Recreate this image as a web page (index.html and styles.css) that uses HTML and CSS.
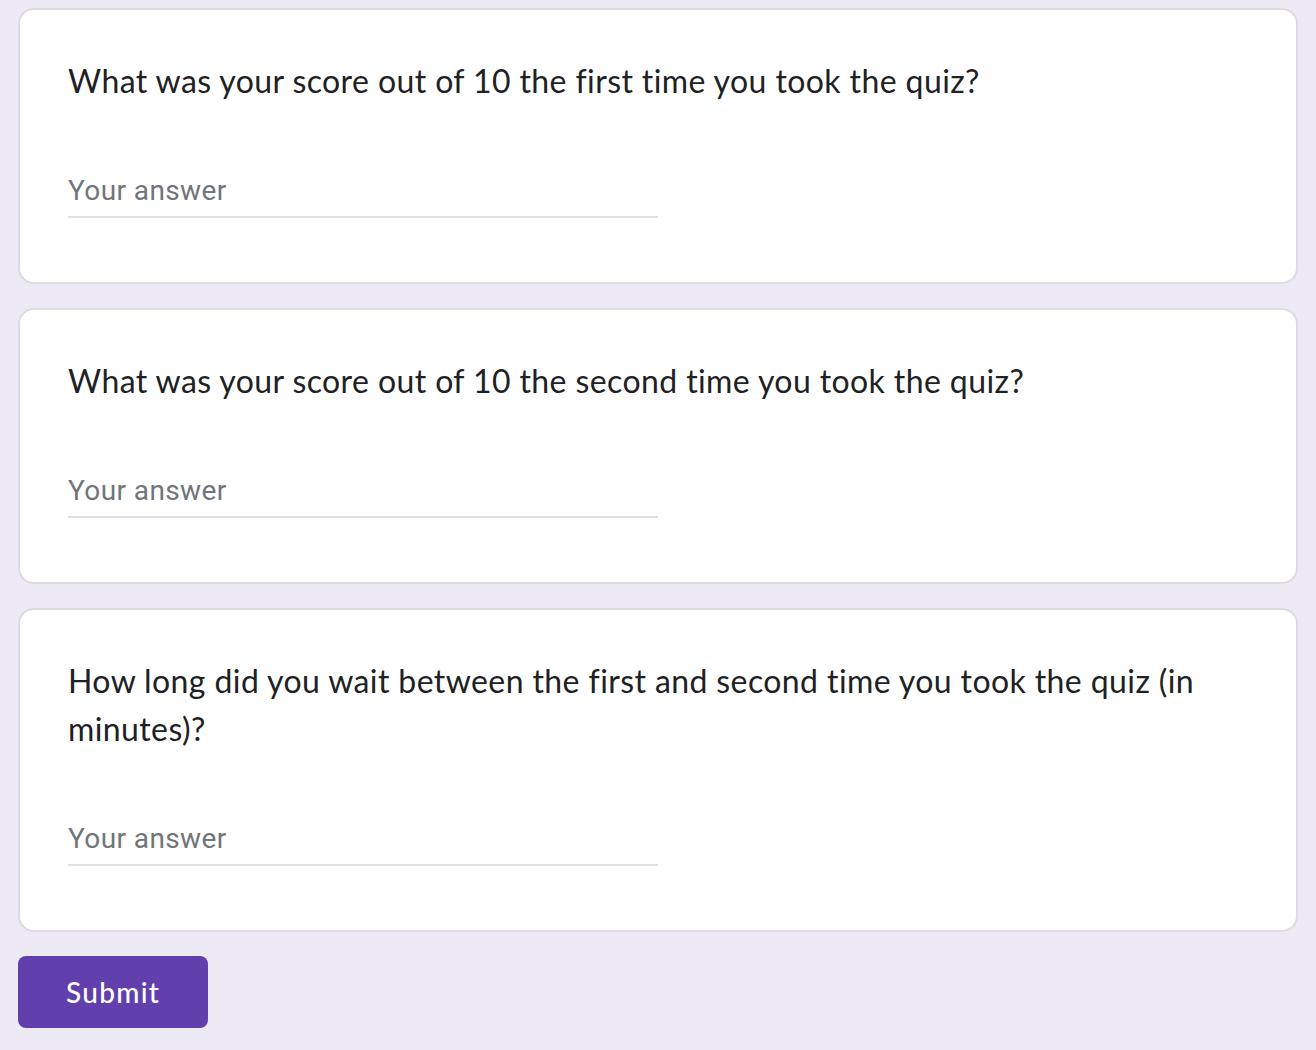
FILE: index.html
```html
<!DOCTYPE html>
<html lang="en">
<head>
<meta charset="utf-8">
<title>Quiz form</title>
<link rel="stylesheet" href="styles.css">
</head>
<body>
<main class="form">
  <section class="card">
    <div class="question">What was your score out of 10 the first time you took the quiz?</div>
    <div class="answer">Your answer</div>
  </section>
  <section class="card">
    <div class="question">What was your score out of 10 the second time you took the quiz?</div>
    <div class="answer">Your answer</div>
  </section>
  <section class="card">
    <div class="question">How long did you wait between the first and second time you took the quiz (in minutes)?</div>
    <div class="answer">Your answer</div>
  </section>
  <div class="actions">
    <button class="submit" type="button">Submit</button>
  </div>
</main>
</body>
</html>
```
FILE: styles.css
```css
html, body {
  margin: 0;
  padding: 0;
  background: #ede9f5;
}
body {
  padding: 8px 18px 0 18px;
}
.form {
  display: flex;
  flex-direction: column;
  gap: 24px;
}
.card {
  background: #fff;
  border: 2px solid #dcdce0;
  border-radius: 16px;
  padding: 47px 48px 64px 48px;
}
.question {
  font-family: Lato, "Open Sans", sans-serif;
  font-size: 32px;
  line-height: 48px;
  color: #202124;
  letter-spacing: 0.4px;
  margin-bottom: 62px;
}
.answer {
  width: 590px;
  font-family: Roboto, Arial, sans-serif;
  font-size: 28px;
  line-height: 48px;
  letter-spacing: 0.4px;
  color: #70757a;
  padding-bottom: 1px;
  border-bottom: 2px solid #e0e0e0;
}
.actions {
  display: flex;
}
.submit {
  height: 72px;
  padding: 0 48px;
  border: none;
  border-radius: 8px;
  background: #6140ae;
  color: #fff;
  font-family: Lato, "Open Sans", sans-serif;
  font-size: 28px;
  font-weight: 500;
  letter-spacing: 1.3px;
  cursor: pointer;
}
```
